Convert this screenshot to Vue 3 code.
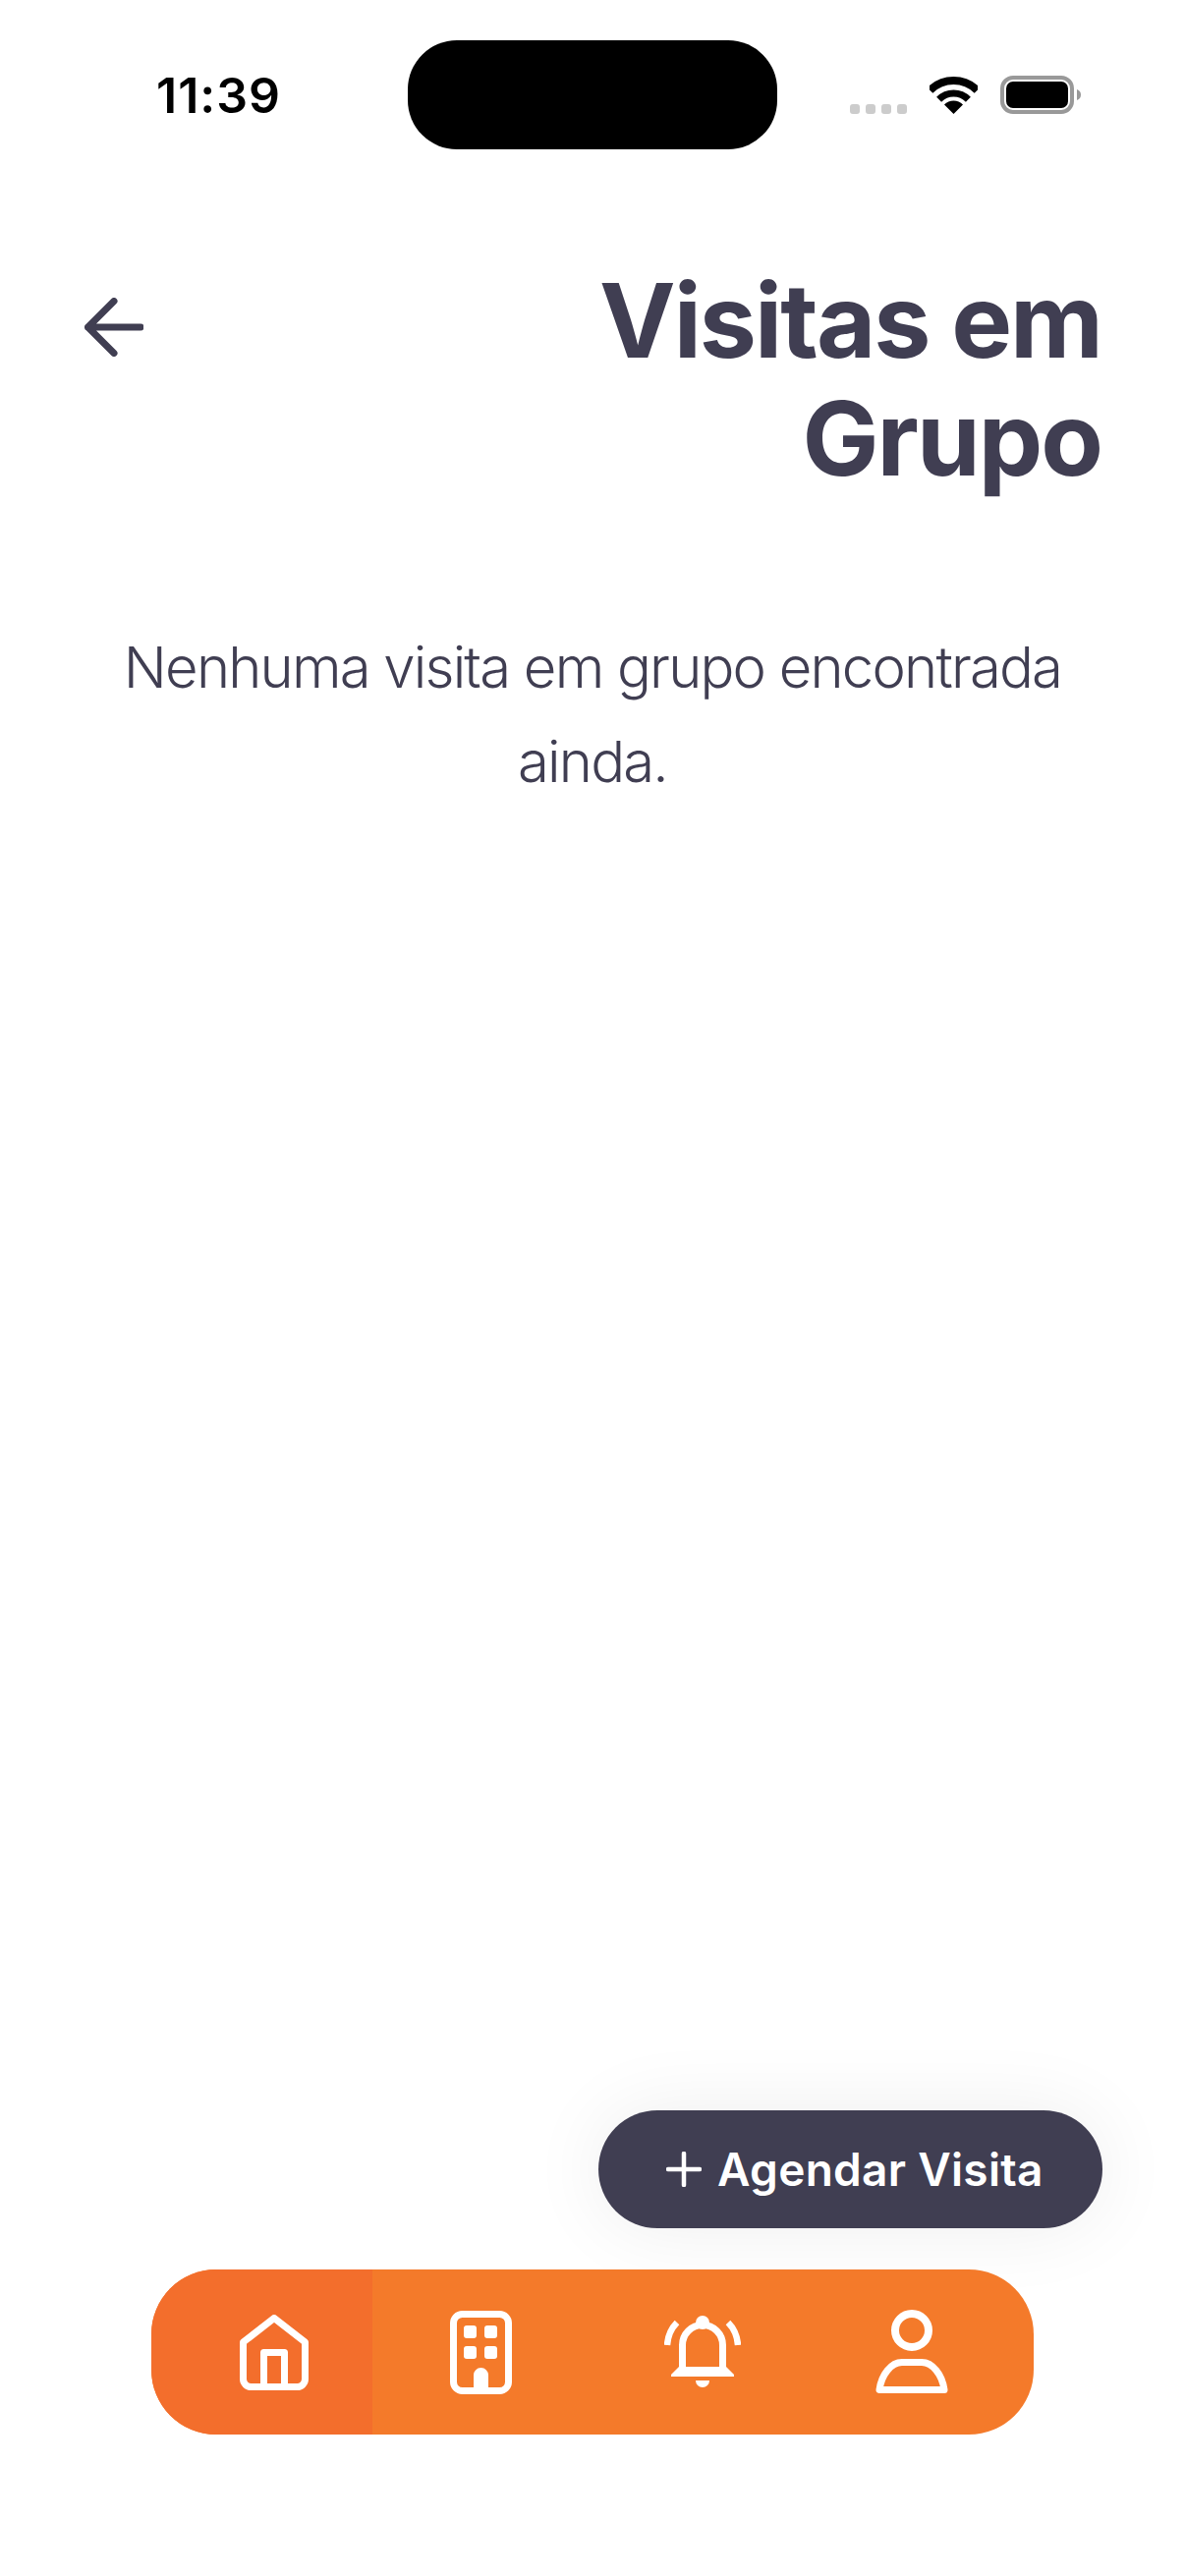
<template>
  <div class="screen">
    <div class="status-bar">
      <span class="time">11:39</span>
      <div class="island"></div>
      <div class="status-icons">
        <div class="signal">
          <span v-for="n in 4" :key="n" class="dot"></span>
        </div>
        <svg class="wifi" width="49" height="38" viewBox="0 0 49 38">
          <path d="M0.5 14A34 34 0 0 1 48.5 14" fill="none" stroke="#000" stroke-width="8" />
          <path d="M9.6 23.2A21 21 0 0 1 39.4 23.2" fill="none" stroke="#000" stroke-width="7" />
          <path d="M24.5 38L15 28.5A13.4 13.4 0 0 1 34 28.5Z" fill="#000" />
        </svg>
        <svg class="battery" width="82" height="39" viewBox="0 0 82 39">
          <rect x="2" y="2" width="71" height="35" rx="11" fill="none" stroke="#999" stroke-width="4" />
          <rect x="6" y="6" width="63" height="27" rx="7" fill="#000" />
          <path d="M78 14C81 15 82 17 82 19.500C82 22 81 24 78 25Z" fill="#999" />
        </svg>
      </div>
    </div>

    <header class="header">
      <svg class="back" width="60" height="60" viewBox="0 0 60 60">
        <path d="M3.500 30H57M30 3.500L3.500 30L30 56.500" fill="none" stroke="#403e52" stroke-width="7" stroke-linecap="round" stroke-linejoin="round" />
      </svg>
      <h1 class="title">Visitas em Grupo</h1>
    </header>

    <p class="empty">Nenhuma visita em grupo encontrada ainda.</p>

    <div class="spacer"></div>

    <div class="fab-row">
      <button class="fab">
        <svg width="36" height="36" viewBox="0 0 36 36">
          <path d="M2 18H34M18 2V34" fill="none" stroke="#fff" stroke-width="4.500" stroke-linecap="round" />
        </svg>
        <span>Agendar Visita</span>
      </button>
    </div>

    <nav class="tabbar">
      <div class="tab tab-home active">
        <svg width="70" height="77" viewBox="0 0 70 77">
          <path d="M35 3.500L66.500 28V65.500A8 8 0 0 1 58.500 73.500H11.500A8 8 0 0 1 3.500 65.500V28Z" fill="none" stroke="#fff" stroke-width="7" stroke-linejoin="round" />
          <path d="M24.500 73.500V38.500H45.500V73.500" fill="none" stroke="#fff" stroke-width="7" stroke-linejoin="round" />
        </svg>
      </div>
      <div class="tab tab-building">
        <svg width="63" height="85" viewBox="0 0 63 85">
          <rect x="3.500" y="3.500" width="56" height="78" rx="9" fill="none" stroke="#fff" stroke-width="7" />
          <rect x="14" y="15" width="13" height="13" rx="3" fill="#fff" />
          <rect x="35" y="15" width="13" height="13" rx="3" fill="#fff" />
          <rect x="14" y="36" width="13" height="13" rx="3" fill="#fff" />
          <rect x="35" y="36" width="13" height="13" rx="3" fill="#fff" />
          <path d="M24 82V65.500A7.500 7.500 0 0 1 39 65.500V82Z" fill="#fff" />
        </svg>
      </div>
      <div class="tab tab-bell">
        <svg width="78" height="74" viewBox="0 0 78 74">
          <circle cx="39" cy="7" r="7" fill="#fff" />
          <path d="M18.500 56V30A20.500 20.500 0 0 1 59.500 30V56" fill="none" stroke="#fff" stroke-width="7" />
          <path d="M7 62V60L15 52H63L71 60V62Z" fill="#fff" />
          <path d="M32 66H46A7 7 0 0 1 32 66Z" fill="#fff" />
          <path d="M3 30Q4 16 13 7M75 30Q74 16 65 7" fill="none" stroke="#fff" stroke-width="6.500" />
        </svg>
      </div>
      <div class="tab tab-profile">
        <svg width="74" height="86" viewBox="0 0 74 86">
          <circle cx="37" cy="21" r="17" fill="none" stroke="#fff" stroke-width="8" />
          <path d="M4 81.500H70C68 66 58 53.500 47 53.500H27C16 53.500 6 66 4 81.500Z" fill="none" stroke="#fff" stroke-width="7" stroke-linejoin="round" />
        </svg>
      </div>
    </nav>
  </div>
</template>

<script setup>
</script>

<style>
html,
body {
  margin: 0;
  background: #fff;
}
</style>

<style scoped>
.screen {
  width: 1206px;
  height: 2622px;
  display: flex;
  flex-direction: column;
  overflow: hidden;
  background: #fff;
  font-family: Inter, "Liberation Sans", sans-serif;
}

.status-bar {
  display: flex;
  align-items: center;
  padding: 41px 0 0 159px;
}

.time {
  width: 256px;
  font-size: 50px;
  font-weight: 600;
  letter-spacing: 1px;
  color: #000;
  line-height: 1;
}

.island {
  width: 376px;
  height: 111px;
  border-radius: 50px;
  background: #000;
}

.status-icons {
  display: flex;
  align-items: flex-end;
  margin-left: 74px;
  gap: 23px;
}

.signal {
  display: flex;
  gap: 6px;
}

.dot {
  width: 10px;
  height: 10px;
  border-radius: 3px;
  background: #ccc;
}

.wifi,
.battery {
  display: block;
}

.header {
  display: flex;
  justify-content: space-between;
  align-items: flex-start;
  padding: 114px 85px 0 86px;
}

.back {
  margin-top: 37px;
}

.title {
  width: 600px;
  margin: 0;
  font-size: 104px;
  font-weight: 700;
  line-height: 120px;
  letter-spacing: -2px;
  text-align: right;
  color: #403e52;
}

.empty {
  margin: 125px 120px 0;
  font-size: 58px;
  font-weight: 300;
  line-height: 96px;
  letter-spacing: -1.8px;
  text-align: center;
  color: #403e52;
}

.spacer {
  flex: 1;
}

.fab-row {
  display: flex;
  justify-content: flex-end;
  padding-right: 84px;
}

.fab {
  display: flex;
  align-items: center;
  gap: 16px;
  width: 513px;
  height: 120px;
  padding: 0 0 0 69px;
  border: none;
  border-radius: 60px;
  background: #403e52;
  color: #fff;
  font-family: inherit;
  font-size: 46px;
  font-weight: 600;
  letter-spacing: 0.3px;
  box-shadow: 0 0 80px rgba(0, 0, 0, 0.07);
}

.fab svg {
  flex: none;
}

.tabbar {
  display: flex;
  width: 898px;
  height: 168px;
  margin: 42px 0 144px 154px;
  border-radius: 66px;
  overflow: hidden;
  background: #f47a2a;
}

.tab {
  display: flex;
  align-items: center;
  justify-content: center;
}

.tab-home {
  width: 225px;
  padding-left: 24px;
  box-sizing: border-box;
}

.tab-building {
  width: 220px;
}

.tab-bell {
  width: 232px;
}

.tab-profile {
  width: 221px;
  padding-right: 28px;
  box-sizing: border-box;
}

.active {
  background: #f36e2c;
}
</style>
